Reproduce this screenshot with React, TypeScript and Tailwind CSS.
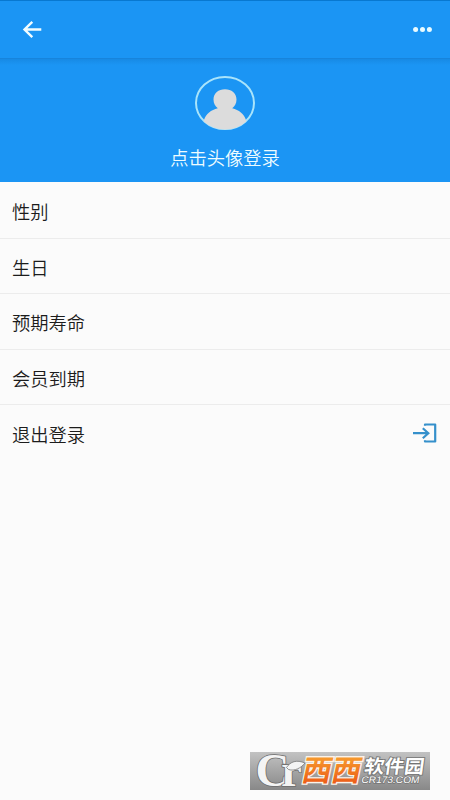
import React from 'react';

const items = [
  { label: '性别' },
  { label: '生日' },
  { label: '预期寿命' },
  { label: '会员到期' },
  { label: '退出登录', icon: true },
];

const BackIcon = () => (
  <svg width="20" height="18" viewBox="0 0 20 18" fill="none" stroke="#f2fdff" strokeWidth="2.4">
    <path d="M19.300 8.500H2.500M10.300 0.900L2.500 8.500l7.800 7.600" />
  </svg>
);

const MoreIcon = () => (
  <svg width="20" height="6" viewBox="0 0 20 6" fill="#e9fbff">
    <circle cx="2.600" cy="2.600" r="2.500" />
    <circle cx="9.500" cy="2.600" r="2.500" />
    <circle cx="16.400" cy="2.600" r="2.500" />
  </svg>
);

const Avatar = () => (
  <svg width="60" height="54" viewBox="0 0 60 54">
    <defs>
      <clipPath id="avatar-clip">
        <ellipse cx="30" cy="27" rx="29.500" ry="26.500" />
      </clipPath>
    </defs>
    <ellipse cx="30" cy="27" rx="29" ry="26" fill="none" stroke="#a9e4fb" strokeWidth="2" />
    <g clipPath="url(#avatar-clip)" fill="#dcdcdc">
      <path d="M18.500 23.500c0-6.200 5-10.200 11.500-10.200s11.500 4 11.500 10.200c0 3.700-1.600 6.700-4.300 8.800C44 34 49 38 51 44v10H9V44c2-6 7-10 13.800-11.700-2.700-2.100-4.300-5.100-4.300-8.800z" />
    </g>
  </svg>
);

const LogoutIcon = () => (
  <svg width="26" height="20" viewBox="0 0 26 20" fill="none" stroke="#3590cb" strokeWidth="2.2">
    <path d="M1 10.200h15M10.800 5.200l5.500 5-5.500 5" />
    <path d="M13 2.800V1.500h10.200v17H13V17.200" strokeLinejoin="round" />
  </svg>
);

const Watermark = () => (
  <svg className="block overflow-visible" width="180" height="38" viewBox="0 0 180 38">
    <defs>
      <linearGradient id="plate" x1="0" y1="0" x2="0" y2="1">
        <stop offset="0" stopColor="#c2c2c2" />
        <stop offset="1" stopColor="#888" />
      </linearGradient>
      <linearGradient id="orange" x1="0" y1="0" x2="0" y2="1">
        <stop offset="0.100" stopColor="#f9ab34" />
        <stop offset="0.900" stopColor="#ec5a16" />
      </linearGradient>
    </defs>
    <rect width="180" height="38" fill="url(#plate)" />
    <text x="5.500 31" y="33.500" fontFamily='"Liberation Serif", serif' fontSize="47" fontWeight="700" fill="#f4f4f4" stroke="#6c6c6c" strokeWidth="1.600" paintOrder="stroke">Cr</text>
    <path d="M36.500 15.500c4-6 10-8 18.500-4.500-4 5-10.500 8.500-16.500 6.500z" fill="#f4f4f4" stroke="#777" strokeWidth="0.800" />
    <g fontFamily='"Noto Sans CJK SC", sans-serif'>
      <text transform="translate(50.500 28.500) skewX(-12) scale(1 1.080)" fontSize="27.500" fontWeight="700" textLength="59" lengthAdjust="spacingAndGlyphs" fill="url(#orange)" stroke="#fbf3ea" strokeWidth="2.400" paintOrder="stroke">西西</text>
      <text transform="translate(113.500 20.500) skewX(-8)" fontSize="18.500" fontWeight="700" textLength="60" lengthAdjust="spacingAndGlyphs" fill="#fff" stroke="#747474" strokeWidth="1.800" paintOrder="stroke">软件园</text>
    </g>
    <text transform="translate(111 31) skewX(-10)" fontFamily='"Liberation Sans", sans-serif' fontSize="9.500" textLength="58" lengthAdjust="spacingAndGlyphs" fill="#fff" stroke="#777" strokeWidth="1.500" paintOrder="stroke">CR173.COM</text>
  </svg>
);

export default function App() {
  return (
    <div className="flex h-[800px] w-[450px] flex-col overflow-hidden bg-[#fbfbfb] font-['Noto_Sans_CJK_SC',sans-serif] font-[350]">
      <header className="flex h-[59px] shrink-0 items-center justify-between border-t border-b border-t-[#0878d0] border-b-[#1784dc] bg-[#1b95f4] pr-[17px] pl-[22px]">
        <button aria-label="返回">
          <BackIcon />
        </button>
        <button aria-label="更多">
          <MoreIcon />
        </button>
      </header>

      <section className="flex h-[123px] shrink-0 flex-col items-center bg-[#1b95f4] bg-linear-to-b from-[#178ae5] to-[#1b95f4] to-[6px] pt-[17px]">
        <Avatar />
        <span className="mt-[14px] text-[18.3px] leading-[26px] text-[#eefcff]">点击头像登录</span>
      </section>

      <ul className="pt-px">
        {items.map((item) => (
          <li
            key={item.label}
            className="flex h-[55.6px] items-center justify-between border-b border-[#ececec] pr-3 pl-3 text-[18.3px] text-[#1c1c1c] last:border-b-0"
          >
            <span className="mt-[3px]">{item.label}</span>
            {item.icon && <LogoutIcon />}
          </li>
        ))}
      </ul>

      <footer className="mt-auto mr-5 mb-[10px] self-end">
        <Watermark />
      </footer>
    </div>
  );
}
